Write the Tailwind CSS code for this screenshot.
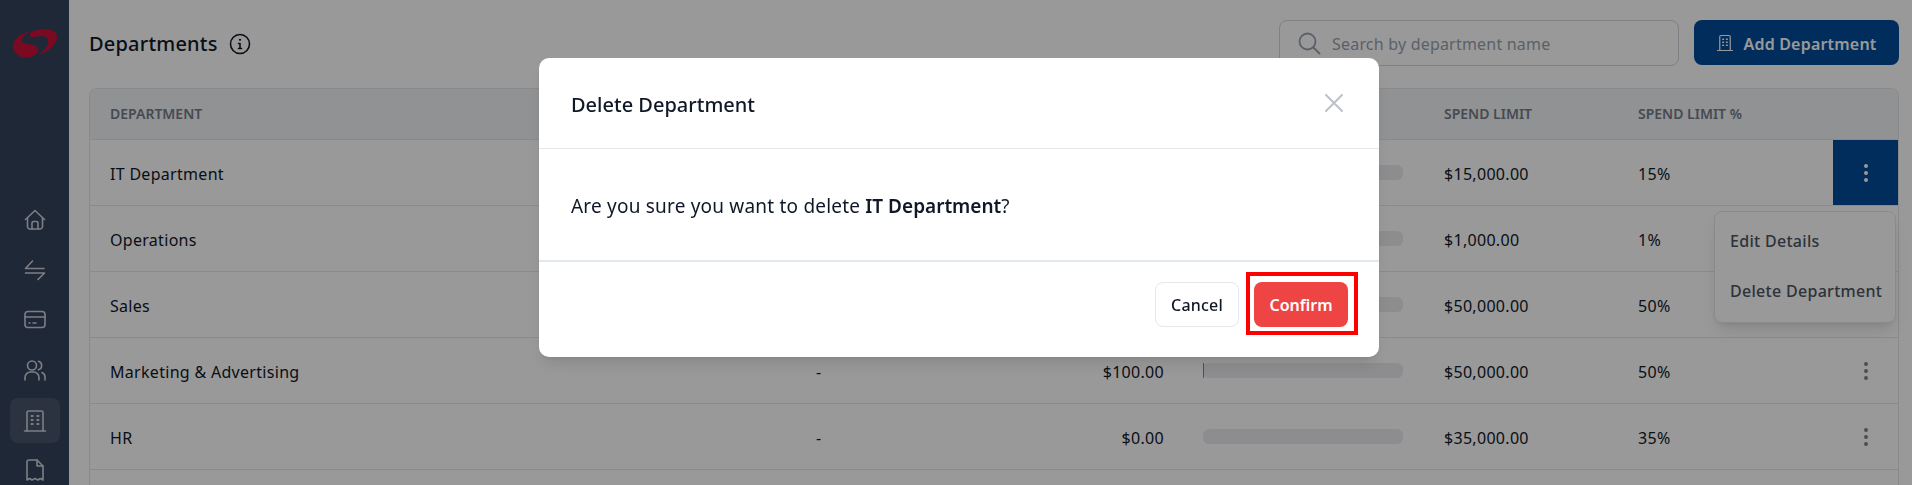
<!DOCTYPE html>
<html lang="en">
  <head>
    <meta charset="UTF-8" />
    <meta name="viewport" content="width=device-width, initial-scale=1.0" />
    <script src="https://cdn.jsdelivr.net/npm/@tailwindcss/browser@4"></script>
    <title>Departments</title>
  </head>
  <body class="bg-white font-['Noto_Sans',sans-serif] text-gray-900">
    <div class="flex h-[485px] w-[1912px] overflow-hidden">
      <!-- sidebar -->
      <aside class="flex w-[69px] shrink-0 flex-col items-center bg-[#34435c]">
        <svg class="mt-[29px] h-[29px] w-[44px] shrink-0" viewBox="0 0 44 29" fill="#cc1039">
          <path d="M18 3 C23 1 28 0 32 0 C39 0 44 3 44 8 C44 15 36 23 25 26 C31 22 35 17 35 13 C35 9 33 7 29 7 C25 7 22 8.500 18 8 C16.500 6.500 16.500 4.500 18 3 Z" />
          <path d="M18 2 C8 4.500 0 10 0 17 C0 24 6 28.500 13 28.500 C19 28.500 25.500 25.500 25.500 21 C25.500 17.500 21 16 16.500 15 C13 14.300 9 14.400 8.700 12.500 C8.400 9 12 5 18 2 Z" />
        </svg>
        <div class="mt-[137px] flex flex-col items-center text-[#cfd3dc]">
          <div class="flex h-[50px] w-[50px] items-center justify-center">
            <svg class="h-6 w-6" viewBox="0 0 24 24" fill="none" stroke="currentColor" stroke-width="1.6" stroke-linecap="round" stroke-linejoin="round">
              <path d="M2.500 11.500 12 2.500l9.500 9" />
              <path d="M4.500 10v8.500a2.500 2.500 0 0 0 2.500 2.500h10a2.500 2.500 0 0 0 2.500-2.500V10" />
              <path d="M9 21v-6a1.500 1.500 0 0 1 1.500-1.500h3A1.500 1.500 0 0 1 15 15v6" />
            </svg>
          </div>
          <div class="flex h-[50px] w-[50px] items-center justify-center">
            <svg class="h-6 w-6" viewBox="0 0 24 24" fill="none" stroke="currentColor" stroke-width="1.6" stroke-linecap="round" stroke-linejoin="round">
              <path d="M21 10.500H2.500L9.500 3" />
              <path d="M2.500 15h19L15 21.500" />
            </svg>
          </div>
          <div class="flex h-[50px] w-[50px] items-center justify-center">
            <svg class="h-6 w-6" viewBox="0 0 24 24" fill="none" stroke="currentColor" stroke-width="1.6" stroke-linecap="round" stroke-linejoin="round">
              <rect x="2" y="3.500" width="20" height="16" rx="3" />
              <path d="M2 9h20" />
              <path d="M6 15h1M10 15h3" />
            </svg>
          </div>
          <div class="flex h-[50px] w-[50px] items-center justify-center">
            <svg class="h-6 w-6" viewBox="0 0 24 24" fill="none" stroke="currentColor" stroke-width="1.6" stroke-linecap="round" stroke-linejoin="round">
              <circle cx="9" cy="7.500" r="4.500" />
              <path d="M2 22v-2.500A5.500 5.500 0 0 1 7.500 14h3a5.500 5.500 0 0 1 5.500 5.500V22" />
              <path d="M15.500 3.200a4.500 4.500 0 0 1 0 8.600" />
              <path d="M19 14.500a5 5 0 0 1 3 4.500v3" />
            </svg>
          </div>
          <div class="mt-[3px] flex h-[45px] w-[50px] items-center justify-center rounded-lg bg-[#475569]">
            <svg class="h-6 w-6" viewBox="0 0 24 24" fill="none" stroke="currentColor" stroke-width="1.6" stroke-linecap="round" stroke-linejoin="round">
              <path d="M1.500 22h21" />
              <path d="M4 22V3.500A1.500 1.500 0 0 1 5.500 2h13A1.500 1.500 0 0 1 20 3.500V22" />
              <path d="M8.500 7h1.200M14.300 7h1.200M8.500 11h1.200M14.300 11h1.200M8.500 15h1.200M14.300 15h1.200" stroke-width="2" />
            </svg>
          </div>
          <div class="mt-[2px] flex h-[50px] w-[50px] items-center justify-center">
            <svg class="h-6 w-6" viewBox="0 0 24 24" fill="none" stroke="currentColor" stroke-width="1.6" stroke-linecap="round" stroke-linejoin="round">
              <path d="M14 2H6a2 2 0 0 0-2 2v18l2.700-1.500L9 22l3-1.500L15 22l2.300-1.500L20 22V8Z" />
              <path d="M14 2v6h6" />
            </svg>
          </div>
        </div>
      </aside>

      <!-- main -->
      <main class="flex-1 pt-5 pl-5 pr-[13px]">
        <div class="flex h-[68px] items-start">
          <h1 class="mt-[10px] flex items-center gap-[11px] text-xl leading-7 font-medium tracking-[0.2px] text-[#111827]">
            Departments
            <svg class="h-[22px] w-[22px]" viewBox="0 0 22 22" fill="none" stroke="currentColor" stroke-width="1.6" stroke-linecap="round" stroke-linejoin="round">
              <circle cx="11" cy="11" r="9.500" />
              <path d="M9.500 10.500H11v5M9.500 15.500h3" />
              <path d="M11 6.800h.01" stroke-width="2.200" />
            </svg>
          </h1>
          <div class="ml-auto flex h-[46px] w-[400px] items-center gap-[11px] rounded-lg border border-gray-300 pl-[17px]">
            <svg class="h-[24px] w-[24px] text-gray-400" viewBox="0 0 24 24" fill="none" stroke="currentColor" stroke-width="1.800" stroke-linecap="round">
              <circle cx="10.500" cy="10.500" r="8" />
              <path d="m16.500 16.500 6 6" />
            </svg>
            <span class="pt-[2px] text-base tracking-[0.2px] text-gray-400">Search by department name</span>
          </div>
          <button class="ml-[15px] flex h-[45px] w-[205px] items-center justify-center gap-[9px] rounded-lg bg-[#004b99] text-base font-semibold tracking-[0.2px] text-white">
            <svg class="h-[18px] w-[18px]" viewBox="0 0 24 24" fill="none" stroke="currentColor" stroke-width="1.600" stroke-linecap="round" stroke-linejoin="round">
              <path d="M2 22h20" />
              <path d="M5 22V3.500A1.500 1.500 0 0 1 6.500 2h11A1.500 1.500 0 0 1 19 3.500V22" />
              <path d="M9 7h1M14 7h1M9 11h1M14 11h1M9 15h1M14 15h1" stroke-width="2" />
            </svg>
            <span class="pt-[2px]">Add Department</span>
          </button>
        </div>

        <!-- table -->
        <div class="relative rounded-t-lg border border-b-0 border-gray-200">
          <div class="grid h-[51px] grid-cols-[726px_180px_168px_39px_200px_41px_194px_195px_65px] items-center rounded-t-lg border-b border-gray-200 bg-[#f1f3f6] text-sm font-semibold text-[#767c87]">
            <span class="pl-5">DEPARTMENT</span>
            <span></span><span></span><span></span><span></span><span></span>
            <span>SPEND LIMIT</span>
            <span>SPEND LIMIT %</span>
            <span></span>
          </div>

          <div class="grid h-[66px] grid-cols-[726px_180px_168px_39px_200px_41px_194px_195px_65px] items-center border-b border-gray-200 text-base tracking-[0.3px] [&>span]:pt-[2px]">
            <span class="pl-5">IT Department</span>
            <span></span><span></span><span></span>
            <div class="h-[15px] rounded-md bg-[#ebebee]"></div>
            <span></span>
            <span>$15,000.00</span>
            <span>15%</span>
            <div class="flex h-full items-center justify-center bg-[#004b99] text-white">
              <svg class="h-[20px] w-[6px]" viewBox="0 0 6 20" fill="currentColor"><circle cx="3" cy="3" r="2" /><circle cx="3" cy="10" r="2" /><circle cx="3" cy="17" r="2" /></svg>
            </div>
          </div>

          <div class="grid h-[66px] grid-cols-[726px_180px_168px_39px_200px_41px_194px_195px_65px] items-center border-b border-gray-200 text-base tracking-[0.3px] [&>span]:pt-[2px]">
            <span class="pl-5">Operations</span>
            <span></span><span></span><span></span>
            <div class="h-[15px] rounded-md bg-[#ebebee]"></div>
            <span></span>
            <span>$1,000.00</span>
            <span>1%</span>
            <span></span>
          </div>

          <div class="grid h-[66px] grid-cols-[726px_180px_168px_39px_200px_41px_194px_195px_65px] items-center border-b border-gray-200 text-base tracking-[0.3px] [&>span]:pt-[2px]">
            <span class="pl-5">Sales</span>
            <span></span><span></span><span></span>
            <div class="h-[15px] rounded-md bg-[#ebebee]"></div>
            <span></span>
            <span>$50,000.00</span>
            <span>50%</span>
            <span></span>
          </div>

          <div class="grid h-[66px] grid-cols-[726px_180px_168px_39px_200px_41px_194px_195px_65px] items-center border-b border-gray-200 text-base tracking-[0.3px] [&>span]:pt-[2px]">
            <span class="pl-5">Marketing &amp; Advertising</span>
            <span>-</span>
            <span class="text-right">$100.00</span>
            <span></span>
            <div class="h-[15px] rounded-md bg-[#ebebee]"><div class="h-full w-px bg-[#4a90e0]"></div></div>
            <span></span>
            <span>$50,000.00</span>
            <span>50%</span>
            <div class="flex justify-center text-[#7d838d]">
              <svg class="h-[20px] w-[6px]" viewBox="0 0 6 20" fill="currentColor"><circle cx="3" cy="3" r="2" /><circle cx="3" cy="10" r="2" /><circle cx="3" cy="17" r="2" /></svg>
            </div>
          </div>

          <div class="grid h-[66px] grid-cols-[726px_180px_168px_39px_200px_41px_194px_195px_65px] items-center border-b border-gray-200 text-base tracking-[0.3px] [&>span]:pt-[2px]">
            <span class="pl-5">HR</span>
            <span>-</span>
            <span class="text-right">$0.00</span>
            <span></span>
            <div class="h-[15px] rounded-md bg-[#ebebee]"></div>
            <span></span>
            <span>$35,000.00</span>
            <span>35%</span>
            <div class="flex justify-center text-[#7d838d]">
              <svg class="h-[20px] w-[6px]" viewBox="0 0 6 20" fill="currentColor"><circle cx="3" cy="3" r="2" /><circle cx="3" cy="10" r="2" /><circle cx="3" cy="17" r="2" /></svg>
            </div>
          </div>
          <div class="h-[40px]"></div>

          <!-- row menu -->
          <div class="absolute top-[122px] right-[2px] w-[182px] rounded-lg border border-gray-200 bg-white pt-[4px] pb-[6px] text-base font-medium tracking-[0.3px] text-[#4b5563] shadow-lg">
            <div class="flex h-[50px] items-center pl-[15px]">Edit Details</div>
            <div class="flex h-[50px] items-center pl-[15px]">Delete Department</div>
          </div>
        </div>
      </main>
    </div>

    <!-- confirm dialog -->
    <div class="fixed inset-0 flex justify-center bg-black/40 pt-[58px] pl-[6px]">
      <div class="h-[299px] w-[840px] rounded-[10px] bg-white shadow-lg">
        <div class="flex h-[91px] items-center justify-between border-b border-gray-200 pr-[36px] pl-8">
          <h2 class="pt-[3px] text-xl font-medium text-gray-900">Delete Department</h2>
          <svg class="h-[18px] w-[18px] text-[#bcc1ca]" viewBox="0 0 18 18" fill="none" stroke="currentColor" stroke-width="2" stroke-linecap="round">
            <path d="M1 1l16 16M17 1 1 17" />
          </svg>
        </div>
        <div class="flex h-[113px] items-center border-b-2 border-[#e2e8f0] pl-8">
          <p class="pt-[3px] text-[19px] tracking-[0.2px] text-gray-900">Are you sure you want to delete <b class="font-semibold tracking-normal">IT Department</b>?</p>
        </div>
        <div class="flex justify-end gap-[15px] pt-[20px] pr-[31px]">
          <button class="h-[45px] w-[84px] rounded-lg border border-gray-200 bg-white pt-px text-base font-medium tracking-[0.2px] text-gray-900">Cancel</button>
          <div class="relative">
            <button class="h-[45px] w-[94px] rounded-lg bg-[#ef4444] pt-px text-base font-semibold text-white">Confirm</button>
            <div class="absolute -top-[10px] -right-[10px] -bottom-[8px] -left-2 border-4 border-[#ff0000]"></div>
          </div>
        </div>
      </div>
    </div>
  </body>
</html>
